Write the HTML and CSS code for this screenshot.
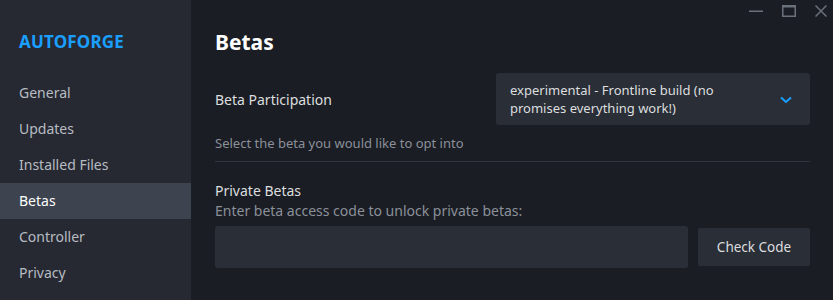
FILE: index.html
```html
<!DOCTYPE html>
<html>
<head>
<meta charset="utf-8">
<link rel="stylesheet" href="styles.css">
</head>
<body>
<div class="app">
  <nav class="sidebar">
    <div class="game-title">AUTOFORGE</div>
    <ul class="nav">
      <li class="nav-item">General</li>
      <li class="nav-item">Updates</li>
      <li class="nav-item">Installed Files</li>
      <li class="nav-item active">Betas</li>
      <li class="nav-item">Controller</li>
      <li class="nav-item">Privacy</li>
    </ul>
  </nav>
  <main class="content">
    <div class="window-controls">
      <svg class="wc" width="14" height="12" viewBox="0 0 14 12"><rect x="0" y="5.5" width="14" height="1.5" fill="#6b717a"/></svg>
      <svg class="wc" width="14" height="12" viewBox="0 0 14 12"><rect x="0.75" y="0.75" width="12.5" height="10.5" fill="none" stroke="#6b717a" stroke-width="1.5"/><rect x="0" y="0" width="14" height="2.5" fill="#6b717a"/></svg>
      <svg class="wc" width="12" height="12" viewBox="0 0 12 12"><path d="M0.5 0.5 L11.5 11.5 M11.5 0.5 L0.5 11.5" stroke="#6b717a" stroke-width="1.5"/></svg>
    </div>
    <h1 class="page-title">Betas</h1>
    <div class="row">
      <div class="row-label">Beta Participation</div>
      <div class="dropdown">
        <span class="dropdown-text">experimental - Frontline build (no promises everything work!)</span>
        <svg class="chevron" width="12" height="8" viewBox="0 0 12 8"><path d="M1 1.5 L6 6 L11 1.5" fill="none" stroke="#1a9fff" stroke-width="2"/></svg>
      </div>
    </div>
    <div class="hint">Select the beta you would like to opt into</div>
    <div class="separator"></div>
    <div class="section-label">Private Betas</div>
    <div class="section-hint">Enter beta access code to unlock private betas:</div>
    <div class="code-row">
      <input class="code-input" type="text">
      <button class="check-btn">Check Code</button>
    </div>
  </main>
</div>
</body>
</html>
```
FILE: styles.css
```css
html, body {
  margin: 0;
  padding: 0;
  height: 100%;
}
body {
  background: #1a1d24;
  font-family: "Noto Sans", "Open Sans", sans-serif;
  overflow: hidden;
}
.app {
  display: flex;
  height: 300px;
}
.sidebar {
  width: 191px;
  flex: none;
  background: #262932;
}
.game-title {
  color: #1a9fff;
  font-weight: 700;
  font-size: 17px;
  padding: 31px 0 0 19px;
  height: 44px;
  line-height: 22px;
  box-sizing: border-box;
  letter-spacing: 0.2px;
}
.nav {
  list-style: none;
  margin: 31px 0 0 0;
  padding: 0;
}
.nav-item {
  height: 36px;
  line-height: 35px;
  padding-left: 19px;
  font-size: 14px;
  color: #b7bcc2;
}
.nav-item.active {
  background: #3d4450;
  color: #ffffff;
}
.content {
  flex: 1;
  position: relative;
  padding: 0 23px 0 24px;
}
.window-controls {
  position: absolute;
  top: 5px;
  right: 6px;
  display: flex;
  gap: 19px;
  align-items: center;
}
.page-title {
  margin: 0;
  padding-top: 28px;
  font-size: 21px;
  line-height: 28px;
  font-weight: 700;
  color: #ffffff;
}
.row {
  display: flex;
  align-items: center;
  justify-content: space-between;
  margin-top: 17px;
}
.row-label {
  font-size: 14px;
  color: #dcdedf;
}
.dropdown {
  width: 314px;
  height: 52px;
  box-sizing: border-box;
  background: #2a2e37;
  border-radius: 3px;
  display: flex;
  align-items: center;
  justify-content: space-between;
  padding: 0 18px 0 14px;
}
.dropdown-text {
  font-size: 13px;
  line-height: 18px;
  color: #dcdedf;
  width: 235px;
}
.chevron {
  margin-top: 2px;
}
.hint {
  margin-top: 8px;
  font-size: 13px;
  line-height: 20px;
  color: #8b9099;
}
.separator {
  height: 1px;
  background: #30343d;
  margin-top: 8px;
}
.section-label {
  margin-top: 19px;
  font-size: 14px;
  line-height: 20px;
  color: #dcdedf;
}
.section-hint {
  font-size: 14px;
  line-height: 20px;
  color: #8b9099;
}
.code-row {
  display: flex;
  align-items: center;
  gap: 10px;
  margin-top: 5px;
}
.code-input {
  flex: 1;
  height: 42px;
  box-sizing: border-box;
  background: #2a2e37;
  border: none;
  border-radius: 3px;
  outline: none;
}
.check-btn {
  width: 112px;
  height: 38px;
  background: #2a2e37;
  border: none;
  border-radius: 2px;
  color: #dcdedf;
  font-family: "Noto Sans", "Open Sans", sans-serif;
  font-size: 13.5px;
}
```
